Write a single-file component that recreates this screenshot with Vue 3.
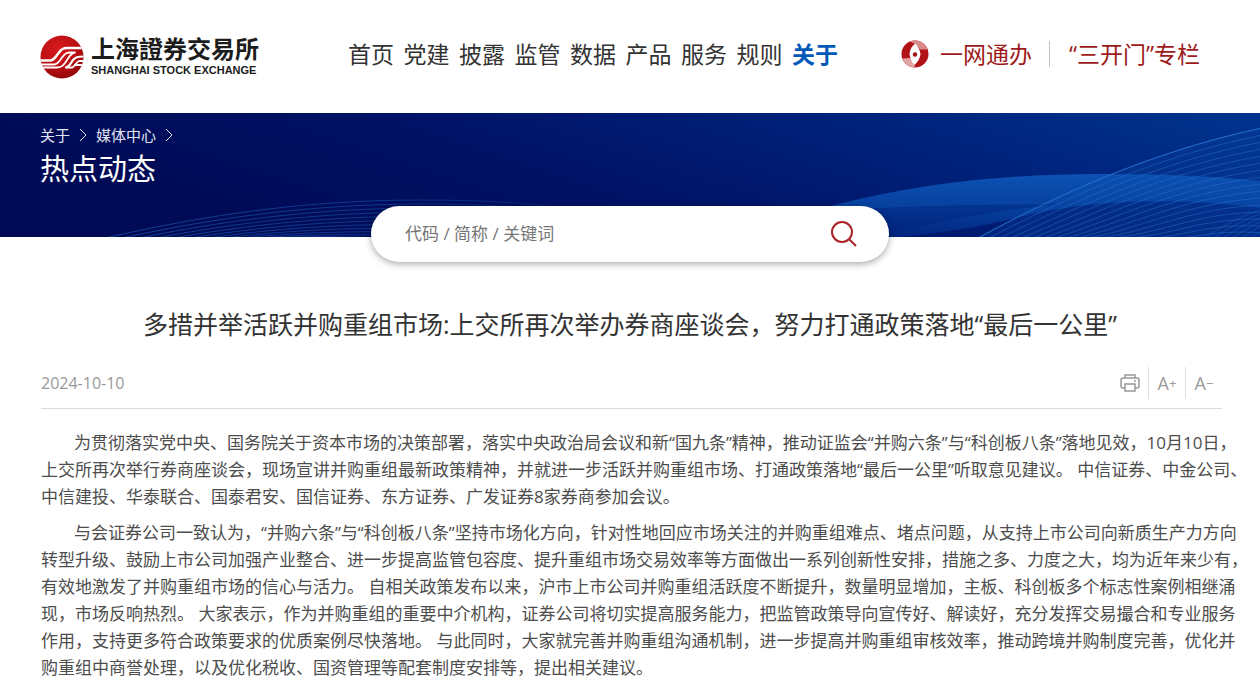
<script setup>
const navItems = ['首页', '党建', '披露', '监管', '数据', '产品', '服务', '规则', '关于']

const leftArcs = Array.from({ length: 11 }, (_, i) => {
  const y = 87 + i * 4
  return `M${105 + i * 17} 125 C${210 + i * 14} ${101 + i * 2} ${310 + i * 8} ${y} ${420 + i * 4} ${y} S${600 - i * 6} ${y + 8} 680 ${128 + i * 3}`
})

const rightArcs = Array.from({ length: 17 }, (_, i) => {
  return `M${978 + i * 11} 125 C${1050 + i * 9} ${86 + i * 3} ${1145 + i * 4} ${40 + i * 5} 1262 ${15 + i * 7}`
})

const crossArcs = Array.from({ length: 6 }, (_, i) => `M${1205 + i * 9} 125 Q${1228 + i * 7} ${108 + i * 2} 1262 ${96 + i * 4}`)

const paragraphs = [
  [
    '为贯彻落实党中央、国务院关于资本市场的决策部署，落实中央政治局会议和新“国九条”精神，推动证监会“并购六条”与“科创板八条”落地见效，10月10日，',
    '上交所再次举行券商座谈会，现场宣讲并购重组最新政策精神，并就进一步活跃并购重组市场、打通政策落地“最后一公里”听取意见建议。 中信证券、中金公司、',
    '中信建投、华泰联合、国泰君安、国信证券、东方证券、广发证券8家券商参加会议。'
  ],
  [
    '与会证券公司一致认为，“并购六条”与“科创板八条”坚持市场化方向，针对性地回应市场关注的并购重组难点、堵点问题，从支持上市公司向新质生产力方向',
    '转型升级、鼓励上市公司加强产业整合、进一步提高监管包容度、提升重组市场交易效率等方面做出一系列创新性安排，措施之多、力度之大，均为近年来少有，',
    '有效地激发了并购重组市场的信心与活力。 自相关政策发布以来，沪市上市公司并购重组活跃度不断提升，数量明显增加，主板、科创板多个标志性案例相继涌',
    '现，市场反响热烈。 大家表示，作为并购重组的重要中介机构，证券公司将切实提高服务能力，把监管政策导向宣传好、解读好，充分发挥交易撮合和专业服务',
    '作用，支持更多符合政策要求的优质案例尽快落地。 与此同时，大家就完善并购重组沟通机制，进一步提高并购重组审核效率，推动跨境并购制度完善，优化并',
    '购重组中商誉处理，以及优化税收、国资管理等配套制度安排等，提出相关建议。'
  ]
]
</script>

<template>
  <div class="page">
    <header class="header">
      <a class="logo" href="#">
        <svg class="logo-mark" viewBox="0 0 44 44" aria-hidden="true">
          <defs>
            <radialGradient id="markRed" cx="0.4" cy="0.3" r="0.75">
              <stop offset="0" stop-color="#d81a1c" />
              <stop offset="0.6" stop-color="#b80d12" />
              <stop offset="1" stop-color="#8c0508" />
            </radialGradient>
            <clipPath id="markClip"><circle cx="22" cy="22" r="21.5" /></clipPath>
          </defs>
          <g clip-path="url(#markClip)">
            <rect width="44" height="44" fill="url(#markRed)" />
            <g fill="none" stroke="#fff" stroke-linejoin="round">
              <path d="M0 25.5H10C14 25.5 16 21 19 17.500C21.500 14 23 13 27 13H44" stroke-width="2.6" />
              <path d="M0 29.5H14C18 29.5 19.500 26 22 22.5C25 18.500 26.500 17.500 30 17.500H35C31.500 18 30 20.500 28 23.500C25 28 23 32.500 17 32.500H2" stroke-width="1.8" />
              <path d="M26 32.5C30 31.500 31 27 33.500 24.500C35.500 22.300 37 21.500 44 21.500" stroke-width="2.2" />
              <path d="M25 32.500H32C35 32 36 27 39 26H44M34 30H44" stroke-width="1.8" />
            </g>
          </g>
        </svg>
        <span class="logo-words">
          <span class="logo-cn" lang="zh-Hant">上海證券交易所</span>
          <span class="logo-en">SHANGHAI STOCK EXCHANGE</span>
        </span>
      </a>
      <nav class="nav">
        <a v-for="item in navItems" :key="item" href="#" :class="{ active: item === '关于' }">{{ item }}</a>
      </nav>
      <div class="services">
        <a class="service" href="#">
          <svg class="service-mark" viewBox="0 0 28 28" aria-hidden="true">
            <circle cx="14" cy="14" r="13.5" fill="#b01216" />
            <path d="M9 1.500A13.500 13.500 0 0 1 26.500 9.500H19L14 4Z" fill="#d98a8a" />
            <path d="M1.500 18.500A13.500 13.500 0 0 0 14 27.500L13 23L8.500 18Z" fill="#e3a5a5" />
            <path d="M14.500 3.500C11 6 9 9 8.500 14C9 19 11 22.500 13.500 25C17 22 19 18 19.500 14C19 10 17 7 14.500 3.500Z" fill="#fff" />
            <circle cx="14" cy="14.5" r="2.2" fill="#a50f14" />
          </svg>
          <span>一网通办</span>
        </a>
        <a class="service column-link" href="#">“三开门”专栏</a>
      </div>
    </header>

    <section class="banner">
      <svg class="banner-art" viewBox="0 0 1260 124" preserveAspectRatio="none" aria-hidden="true">
        <defs>
          <linearGradient id="sky" x1="0" y1="0.3" x2="1" y2="0">
            <stop offset="0" stop-color="#000a55" />
            <stop offset="0.35" stop-color="#001265" />
            <stop offset="0.7" stop-color="#00237c" />
            <stop offset="1" stop-color="#00348e" />
          </linearGradient>
          <linearGradient id="wave" x1="0" y1="0" x2="0" y2="1">
            <stop offset="0" stop-color="#0c52b4" />
            <stop offset="0.55" stop-color="#0744a2" stop-opacity="0.9" />
            <stop offset="1" stop-color="#043a98" stop-opacity="0.4" />
          </linearGradient>
          <linearGradient id="leftLine" gradientUnits="userSpaceOnUse" x1="100" y1="0" x2="600" y2="0">
            <stop offset="0" stop-color="#1c58ac" stop-opacity="0.7" />
            <stop offset="0.6" stop-color="#1450a8" stop-opacity="0.6" />
            <stop offset="1" stop-color="#1450a8" stop-opacity="0.1" />
          </linearGradient>
        </defs>
        <rect width="1260" height="124" fill="url(#sky)" />
        <g fill="none" stroke="url(#leftLine)"><path v-for="(d, i) in leftArcs" :key="i" :d="d" /></g>
        <path d="M780 108C880 75 990 60 1110 61C1170 61 1220 64 1260 68V95C1180 84 1090 86 1020 104C980 114 940 120 900 124H780Z" fill="url(#wave)" />
        <path d="M860 96C940 92 1000 92 1060 91C1000 97 930 110 880 124H860Z" fill="#00247e" opacity="0.5" />
        <path d="M978 124C1050 86 1145 40 1260 15V124Z" fill="#0a4cac" opacity="0.25" />
        <g fill="none" stroke="#2b75cb" stroke-opacity="0.45"><path v-for="(d, i) in rightArcs" :key="i" :d="d" /></g>
        <g fill="none" stroke="#2b75cb" stroke-opacity="0.35"><path v-for="(d, i) in crossArcs" :key="i" :d="d" /></g>
        <path d="M978 125C1050 86 1145 40 1262 15" fill="none" stroke="#2a76d4" stroke-opacity="0.7" />
      </svg>
      <div class="banner-text">
        <div class="crumbs">
          <a href="#">关于</a>
          <svg viewBox="0 0 8 14" aria-hidden="true"><path d="M1 1L7 7L1 13" /></svg>
          <a href="#">媒体中心</a>
          <svg viewBox="0 0 8 14" aria-hidden="true"><path d="M1 1L7 7L1 13" /></svg>
        </div>
        <h1>热点动态</h1>
      </div>
    </section>

    <form class="search" @submit.prevent>
      <input type="text" aria-label="搜索" placeholder="代码 / 简称 / 关键词" />
      <button type="submit" aria-label="搜索">
        <svg viewBox="0 0 28 28" aria-hidden="true">
          <circle cx="12" cy="12" r="10" />
          <path d="M19 19L26 26" />
        </svg>
      </button>
    </form>

    <main class="article">
      <h2>多措并举活跃并购重组市场:上交所再次举办券商座谈会，努力打通政策落地“最后一公里”</h2>
      <div class="meta">
        <time datetime="2024-10-10">2024-10-10</time>
        <div class="tools">
          <button type="button" aria-label="打印">
            <svg viewBox="0 0 20 18" stroke-width="1.5" aria-hidden="true">
              <path d="M5 4V1H15V4M5 14H3Q1 14 1 12V6Q1 4 3 4H17Q19 4 19 6V12Q19 14 17 14H15" />
              <path d="M5 10H15V17H5Z" />
              <path d="M14 7H16" />
            </svg>
          </button>
          <button type="button">A<span>+</span></button>
          <button type="button">A<span>−</span></button>
        </div>
      </div>
      <div class="body">
        <p v-for="(lines, p) in paragraphs" :key="p">
          <template v-for="(line, i) in lines" :key="i">{{ line }}<br v-if="i < lines.length - 1" /></template>
        </p>
      </div>
    </main>
  </div>
</template>

<style>
body {
  margin: 0;
  background: #fff;
}
</style>

<style scoped>
.page {
  font-family: "Open Sans", "Noto Sans CJK SC", sans-serif;
  color: #333;
  overflow-x: hidden;
}
a {
  color: inherit;
  text-decoration: none;
}
button {
  padding: 0;
  border: 0;
  background: none;
  font: inherit;
  color: inherit;
  cursor: pointer;
}
.header {
  display: flex;
  align-items: center;
  box-sizing: border-box;
  height: 113px;
  padding: 0 60px 6px 40px;
}
.logo {
  display: flex;
  align-items: center;
  gap: 7px;
  padding-top: 6px;
}
.logo-mark {
  width: 44px;
  height: 44px;
}
.logo-words {
  display: flex;
  flex-direction: column;
  color: #1c1c1c;
  white-space: nowrap;
}
.logo-cn {
  font: 700 24px/28px "Liberation Sans", "Noto Sans CJK TC", sans-serif;
}
.logo-en {
  font: 700 11px/13px "Liberation Sans", sans-serif;
}
.nav {
  display: flex;
  justify-content: space-between;
  width: 490px;
  margin-left: 89px;
  font-size: 23px;
  line-height: 32px;
  white-space: nowrap;
}
.nav .active {
  color: #0459b8;
  font-weight: 700;
}
.services {
  display: flex;
  align-items: center;
  margin-left: auto;
  font-size: 23px;
  line-height: 32px;
  color: #9e1a1a;
  white-space: nowrap;
}
.service {
  display: flex;
  align-items: center;
  gap: 11px;
}
.service-mark {
  width: 28px;
  height: 28px;
}
.column-link {
  position: relative;
  padding-left: 20px;
  margin-left: 17px;
}
.column-link::before {
  content: "";
  position: absolute;
  left: 0;
  top: 3px;
  height: 26px;
  border-left: 1px solid #c4c4c4;
}
.banner {
  position: relative;
  height: 124px;
  color: #fff;
}
.banner-art {
  position: absolute;
  inset: 0;
  width: 100%;
  height: 100%;
}
.banner-text {
  position: relative;
  padding: 12px 40px 0;
}
.crumbs {
  display: flex;
  align-items: center;
  gap: 9px;
  font-size: 15px;
  line-height: 20px;
  color: #e0e4f0;
}
.crumbs svg {
  width: 8px;
  height: 14px;
  fill: none;
  stroke: currentColor;
}
h1 {
  margin: 4px 0 0;
  font-size: 29px;
  line-height: 40px;
  font-weight: 400;
}
.search {
  position: relative;
  display: flex;
  align-items: center;
  box-sizing: border-box;
  width: 518px;
  max-width: 90%;
  height: 56px;
  margin: -31px auto 0;
  padding: 0 31px 0 34px;
  border-radius: 28px;
  background: #fff;
  box-shadow: 0 2px 7px rgba(0, 0, 0, 0.35);
}
.search input {
  flex: 1;
  min-width: 0;
  padding: 0;
  border: 0;
  outline: 0;
  background: none;
  font: inherit;
  font-size: 17px;
  line-height: 24px;
}
.search input::placeholder {
  color: #757575;
  opacity: 1;
}
.search button {
  display: flex;
}
.search svg {
  width: 28px;
  height: 28px;
  fill: none;
  stroke: #a82226;
  stroke-width: 2;
}
.article {
  padding: 42px 0 16px 41px;
}
h2 {
  margin: 0 41px 0 0;
  font-size: 25px;
  line-height: 40px;
  font-weight: 400;
  text-align: center;
}
.meta {
  display: flex;
  align-items: center;
  justify-content: space-between;
  height: 50px;
  margin: 14px 38px 0 0;
  border-bottom: 1px solid #dcdcdc;
  color: #999;
  font-size: 16px;
}
.tools {
  display: flex;
  font-size: 18px;
}
.tools button {
  display: flex;
  align-items: center;
  justify-content: center;
  width: 37px;
  height: 32px;
}
.tools button + button {
  border-left: 1px solid #dedede;
}
.tools span {
  font-size: 13px;
}
.tools svg {
  width: 20px;
  height: 18px;
  fill: none;
  stroke: currentColor;
}
.body {
  margin-top: 20px;
  font-size: 17px;
  line-height: 27px;
  color: #4d4d4d;
  white-space: nowrap;
}
.body p {
  margin: 0 0 9px;
  text-indent: 33px;
}
</style>
